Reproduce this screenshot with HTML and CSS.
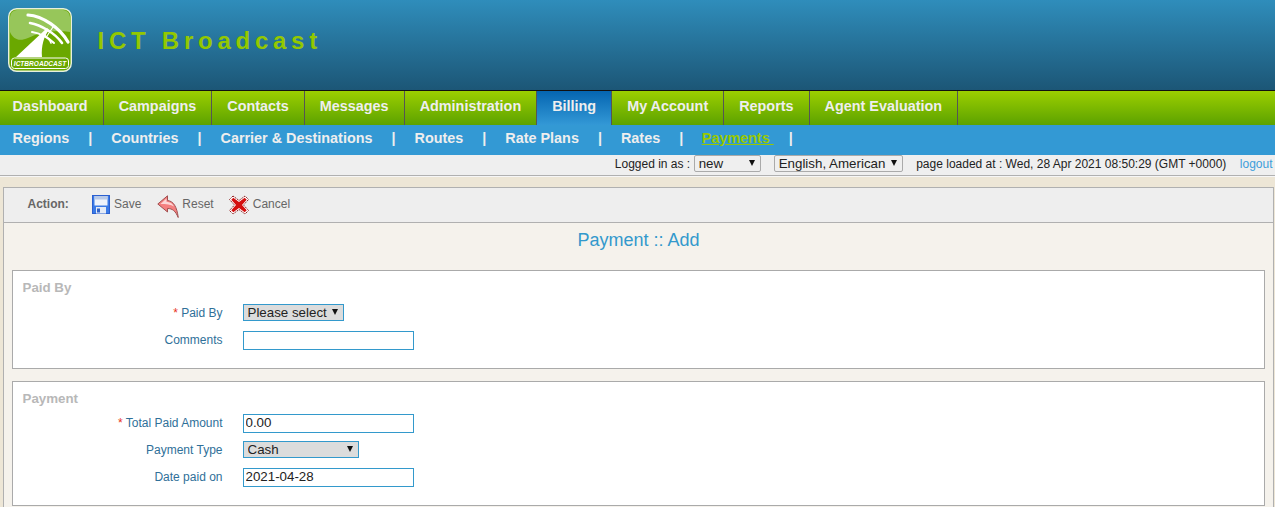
FILE: index.html
```html
<!DOCTYPE html>
<html lang="en">
<head>
<meta charset="utf-8">
<title>ICT Broadcast</title>
<link rel="stylesheet" href="styles.css">
</head>
<body>
<header class="banner">
  <svg class="logo" width="64" height="64" viewBox="0 0 64 64">
    <defs><clipPath id="lc"><rect x="2" y="2" width="60" height="60" rx="7"/></clipPath></defs>
    <rect x="0.7" y="0.7" width="62.600" height="62.600" rx="8" fill="#6aa800" stroke="#e8f0dc" stroke-width="1.400"/>
    <g clip-path="url(#lc)">
      <path d="M2 2H62V24C46 21 30 25 20 30C11 34 5 31 2 24Z" fill="#97c65a"/>
    </g>
    <path d="M8 49L39 20L41 22C36 28 33 38 34 49Z" fill="#fff"/>
    <g fill="none" stroke="#fff" stroke-linecap="round">
      <path d="M20 7C35 8 52 20 60 34" stroke-width="3.200"/>
      <path d="M22 15C33 17 47 25 54 35" stroke-width="2.600"/>
      <path d="M24 24C32 25 41 30 46 35" stroke-width="2"/>
      <path d="M36 27C39 29 42 32 43 35" stroke-width="1.600"/>
      <path d="M45 19L39 28" stroke-width="1.200"/>
    </g>
    <rect x="3.500" y="50" width="57" height="10.500" rx="3" fill="#6aa800" stroke="#fff" stroke-width="1"/>
    <text class="logo-text" transform="translate(32 58) scale(.82 1)" text-anchor="middle">ICTBROADCAST</text>
  </svg>
  <h1 class="brand">ICT Broadcast</h1>
</header>

<nav class="mainnav">
  <a class="tab tab-first">Dashboard</a>
  <a class="tab">Campaigns</a>
  <a class="tab">Contacts</a>
  <a class="tab">Messages</a>
  <a class="tab">Administration</a>
  <a class="tab tab-active">Billing</a>
  <a class="tab">My Account</a>
  <a class="tab">Reports</a>
  <a class="tab">Agent Evaluation</a>
</nav>

<nav class="subnav">
  <a class="sub">Regions</a><span class="pipe">|</span>
  <a class="sub">Countries</a><span class="pipe">|</span>
  <a class="sub">Carrier &amp; Destinations</a><span class="pipe">|</span>
  <a class="sub">Routes</a><span class="pipe">|</span>
  <a class="sub">Rate Plans</a><span class="pipe">|</span>
  <a class="sub">Rates</a><span class="pipe">|</span>
  <a class="sub sub-current">Payments&nbsp;</a><span class="pipe">|</span>
</nav>

<div class="status">
  <span class="status-login">Logged in as :</span>
  <select class="status-select status-user"><option>new</option></select>
  <select class="status-select status-lang"><option>English, American</option></select>
  <span class="status-time">page loaded at : Wed, 28 Apr 2021 08:50:29 (GMT +0000)</span>
  <a class="logout">logout</a>
</div>

<main class="panel">
  <div class="toolbar">
    <span class="action-label">Action:</span>
    <a class="tool tool-save">
      <svg width="18" height="19" viewBox="0 0 18 19">
        <rect x="0.500" y="0.500" width="17" height="18" fill="#3a7ae6" stroke="#2a5fd0"/>
        <rect x="2.500" y="1" width="13" height="9.500" fill="#eef3fb"/>
        <rect x="2.500" y="1" width="13" height="3.500" fill="#b7c9e8"/>
        <rect x="4" y="12" width="10" height="6.500" fill="#e4ebf6"/>
        <rect x="5" y="13.500" width="3" height="4" fill="#2f62c8"/>
      </svg>
      <span class="tool-text">Save</span>
    </a>
    <a class="tool tool-reset">
      <svg width="22" height="23" viewBox="0 0 22 23">
        <path d="M0.800 9L10.500 0.800L10.500 5.500C16.500 6 20 12 21.200 22.500C18.500 16 15.500 13.500 10.500 13.500L10.500 17Z" fill="#f47f7f" stroke="#a05050" stroke-width="1" stroke-linejoin="round"/>
        <path d="M3.500 9L9.500 3.500L9.500 6.800C13 7 15.500 8.500 17 11.500C14 9.500 9 9 3.500 9Z" fill="#fcd6d6"/>
      </svg>
      <span class="tool-text">Reset</span>
    </a>
    <a class="tool tool-cancel">
      <svg width="20" height="20" viewBox="0 0 20 20">
        <path d="M4 1L10 5.500L16 1L19.500 4.500L14.500 10L19.500 15.500L16 19L10 14.500L4 19L0.500 15.500L5.500 10L0.500 4.500Z" fill="#fff" stroke="#8a1c1c" stroke-width="1" stroke-linejoin="round" stroke-dasharray="1.500 .8"/>
        <path d="M4.300 2.800L10 7L15.700 2.800L17.700 4.800L13 10L17.700 15.200L15.700 17.200L10 13L4.300 17.200L2.300 15.200L7 10L2.300 4.800Z" fill="#d40e0e"/>
      </svg>
      <span class="tool-text">Cancel</span>
    </a>
  </div>

  <h2 class="page-title">Payment :: Add</h2>

  <section class="group group-first">
    <h3 class="group-title">Paid By</h3>
    <div class="row">
      <label class="row-label"><span class="req">*</span> Paid By</label>
      <select class="field-select select-paid"><option>Please select</option></select>
    </div>
    <div class="row">
      <label class="row-label">Comments</label>
      <input class="field-input" type="text">
    </div>
  </section>

  <section class="group">
    <h3 class="group-title">Payment</h3>
    <div class="row">
      <label class="row-label"><span class="req">*</span> Total Paid Amount</label>
      <input class="field-input" type="text" value="0.00">
    </div>
    <div class="row">
      <label class="row-label">Payment Type</label>
      <select class="field-select select-type"><option>Cash</option></select>
    </div>
    <div class="row">
      <label class="row-label">Date paid on</label>
      <input class="field-input" type="text" value="2021-04-28">
    </div>
  </section>
</main>
</body>
</html>
```
FILE: styles.css
```css
* { box-sizing: border-box; }
html, body { margin: 0; height: 507px; overflow: hidden; }
body {
  background: #ede6d6;
  font-family: "Liberation Sans", Arial, sans-serif;
  font-size: 12px;
  color: #222;
}

.banner {
  height: 90px;
  display: flex;
  align-items: flex-start;
  padding: 8px 0 0 8px;
  background: linear-gradient(#2f8dbb, #1c5676);
}
.logo { flex: none; display: block; }
.logo-text {
  font-family: "Liberation Sans", Arial, sans-serif;
  font-size: 8px;
  font-weight: bold;
  font-style: italic;
  fill: #fff;
}
.brand {
  margin: 16px 0 0 25.500px;
  font-size: 24px;
  line-height: 34px;
  font-weight: bold;
  letter-spacing: 4.750px;
  color: #93c800;
}

.mainnav {
  height: 35px;
  display: flex;
  background: linear-gradient(#9ccf00, #5ca200);
  border-top: 1px solid #111;
}
.tab {
  padding: 0 15px;
  border-right: 1px solid #555;
  font-size: 14.400px;
  font-weight: bold;
  line-height: 30px;
  color: #eee;
}
.tab-first { padding-left: 12.500px; }
.tab-active { background: linear-gradient(#0565b1, #3398d6); }

.subnav {
  height: 30px;
  display: flex;
  align-items: flex-start;
  padding-left: 12.500px;
  background: #3399d4;
  font-size: 14.400px;
  line-height: 27px;
  font-weight: bold;
  color: #eee;
}
.pipe { margin: 0 19px; }
.sub-current {
  margin-left: -0.500px;
  margin-right: -4px;
  color: #99c800;
  text-decoration: underline;
}

.status {
  height: 22px;
  display: flex;
  align-items: flex-start;
  justify-content: flex-end;
  padding: 0 2.500px 0 0;
  background: #efefef;
  border-bottom: 1px solid #f6f6f6;
  box-shadow: inset 0 -1px 0 #b0b0b0;
  line-height: 18px;
}
.status-select,
.field-select {
  appearance: none;
  height: 17px;
  padding: 0 0 0 3.500px;
  background-image: url("data:image/svg+xml,%3Csvg xmlns='http://www.w3.org/2000/svg' width='6' height='6'%3E%3Cpath d='M0 0H6L3 6Z' fill='%23111'/%3E%3C/svg%3E");
  background-repeat: no-repeat;
  background-position: right 5.500px top 4px;
  font-family: "Liberation Sans", Arial, sans-serif;
  font-size: 13.333px;
  line-height: 15px;
  color: #222;
}
.status-select {
  border: 1px solid #aaa;
  border-radius: 2px;
  background-color: #efefef;
}
.status-user { width: 67px; margin-left: 4px; }
.status-lang { width: 129px; margin-left: 13px; }
.status-time { margin-left: 13px; }
.logout { margin-left: 13.500px; color: #3d9edb; }

.panel {
  margin: 10px 1px 0 3px;
  height: 330px;
  background: #f5f2ec;
  border: 1px solid #b0b0b0;
  border-bottom: 0;
  padding: 0 8px;
}
.toolbar {
  height: 35px;
  margin: 0 -8px;
  display: flex;
  align-items: center;
  padding: 0 0 1px 23.500px;
  background: #eeeeee;
  border-bottom: 1px solid #b0b0b0;
  color: #666;
}
.action-label { width: 64.500px; margin-bottom: 2px; font-weight: bold; }
.tool { display: flex; align-items: center; color: #666; }
.tool svg { display: block; flex: none; }
.tool-text { margin-bottom: 2px; }
.tool-save svg { margin-right: 4px; }
.tool-reset { margin-left: 16px; }
.tool-reset svg { margin: 3px 3px 0 0; }
.tool-cancel { margin-left: 15px; }
.tool-cancel svg { margin-right: 4px; }

.page-title {
  height: 47px;
  margin: 0;
  padding-top: 6px;
  font-size: 18px;
  line-height: 22px;
  font-weight: normal;
  text-align: center;
  color: #3399cc;
}

.group {
  background: #fff;
  border: 1px solid #aaa;
  padding: 9px 0 14px;
  margin-bottom: 12px;
}
.group-title {
  margin: 0 0 3px 9.500px;
  font-size: 13.333px;
  line-height: 16px;
  font-weight: bold;
  color: #b8b8b8;
}
.group-first .group-title { margin-bottom: 4px; }
.row {
  height: 27px;
  display: grid;
  grid-template-columns: 209.500px auto;
  column-gap: 20.500px;
  justify-content: start;
  align-items: center;
}
.row-label { margin-bottom: 2px; text-align: right; color: #2f7099; }
.req { color: #e8331c; }
.field-input {
  width: 171px;
  height: 19px;
  padding: 0 1.500px 2px;
  border: 1px solid #3399cc;
  border-radius: 0;
  background: #fff;
  font-family: "Liberation Sans", Arial, sans-serif;
  font-size: 13.333px;
  color: #222;
  outline: 0;
}
.field-select {
  margin-bottom: 2px;
  border: 1px solid #3399cc;
  border-radius: 0;
  background-color: #dcdcdc;
}
.select-paid { width: 101px; }
.select-type { width: 116px; }
```
